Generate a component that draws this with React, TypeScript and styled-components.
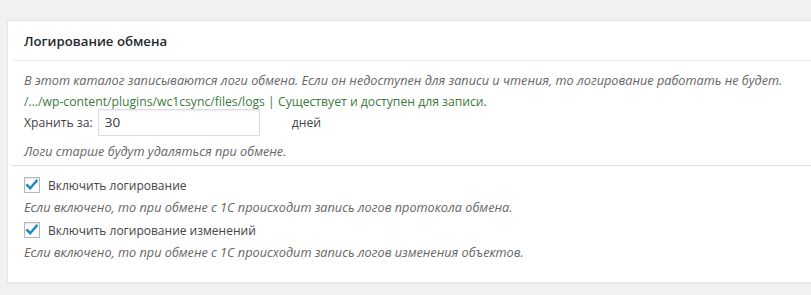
import styled, { createGlobalStyle } from "styled-components";
import { FC } from "react";

const GlobalStyle = createGlobalStyle`
    html, body {
        margin: 0;
        padding: 0;
        background: #f1f1f1;
        font-family: "Open Sans", "Noto Sans", sans-serif;
        font-size: 12.2px;
        color: #444;
        overflow: hidden;
    }
`;

interface PropsOption {
    label: string,
    description: string,
    checked?: boolean,
    top?: number
}

const CheckOption: FC<PropsOption> = ({ label, description, checked, top }) => (
    <>
        <CheckRow $top={top}>
            <CheckBox>
                {checked && (
                    <svg width="16" height="16" viewBox="0 0 16 16">
                        <path d="M3.2 8.2 L6.2 11.2 L12.6 3.8" fill="none" stroke="#1e8cbe" strokeWidth="2.4" strokeLinecap="square" />
                    </svg>
                )}
            </CheckBox>
            <span>{label}</span>
        </CheckRow>
        <Description>{description}</Description>
    </>
);

export default function App() {
    return (
        <Page>
            <GlobalStyle />
            <Postbox>
                <Header>Логирование обмена</Header>
                <Inside>
                    <Description $top={8}>В этот каталог записываются логи обмена. Если он недоступен для записи и чтения, то логирование работать не будет.</Description>
                    <PathLine>/.../wp-content/plugins/wc1csync/files/logs | Существует и доступен для записи.</PathLine>
                    <FieldRow>
                        <span>Хранить за:</span>
                        <NumberInput defaultValue="30" />
                        <span>дней</span>
                    </FieldRow>
                    <Description $top={4}>Логи старше будут удаляться при обмене.</Description>
                    <Separator />
                    <CheckOption checked label="Включить логирование" description="Если включено, то при обмене с 1С происходит запись логов протокола обмена." />
                    <CheckOption checked top={1} label="Включить логирование изменений" description="Если включено, то при обмене с 1С происходит запись логов изменения объектов." />
                </Inside>
            </Postbox>
        </Page>
    );
}

const Page = styled.div`
    padding: 20px 0 13px 7px;
`;

const Postbox = styled.div`
    background: #fff;
    border: 1px solid #e5e5e5;
    border-right: none;
    box-shadow: 0 1px 1px rgba(0, 0, 0, 0.04);
    margin-right: -20px;
    padding-bottom: 19px;
`;

const Header = styled.h2`
    margin: 0 0 0 4px;
    padding: 0 12px;
    height: 39px;
    line-height: 41px;
    font-size: 13.2px;
    font-weight: 600;
    color: #23282d;
    border-bottom: 1px solid #eee;
`;

const Inside = styled.div`
    padding: 0 0 0 16px;
`;

const Description = styled.p<{ $top?: number }>`
    margin: ${p => p.$top ?? 0}px 0 0;
    line-height: 22px;
    font-size: 12.7px;
    font-style: italic;
    color: #666;
`;

const PathLine = styled.p`
    margin: 0;
    line-height: 22px;
    color: #3c7a3c;
`;

const FieldRow = styled.div`
    display: flex;
    align-items: center;
    height: 28px;
    margin-top: -5px;
    span:last-child {
        margin-left: 32px;
    }
`;

const NumberInput = styled.input`
    box-sizing: border-box;
    width: 162px;
    height: 27px;
    margin-left: 5px;
    padding: 0 6px;
    border: 1px solid #ddd;
    box-shadow: inset 0 1px 2px rgba(0, 0, 0, 0.07);
    font-family: inherit;
    font-size: 13.5px;
    color: #32373c;
    outline: none;
`;

const Separator = styled.hr`
    margin: 3px 0 8px -12px;
    border: none;
    border-top: 1px solid #ddd;
`;

const CheckRow = styled.label<{ $top?: number }>`
    display: flex;
    align-items: center;
    gap: 8px;
    height: 22px;
    margin-top: ${p => p.$top ?? 0}px;
    font-size: 12px;
`;

const CheckBox = styled.span`
    box-sizing: border-box;
    width: 16px;
    height: 16px;
    border: 1px solid #b4b9be;
    background: #fff;
    box-shadow: inset 0 1px 2px rgba(0, 0, 0, 0.1);
    display: flex;
    align-items: center;
    justify-content: center;
    svg {
        margin: -1px;
    }
`;
